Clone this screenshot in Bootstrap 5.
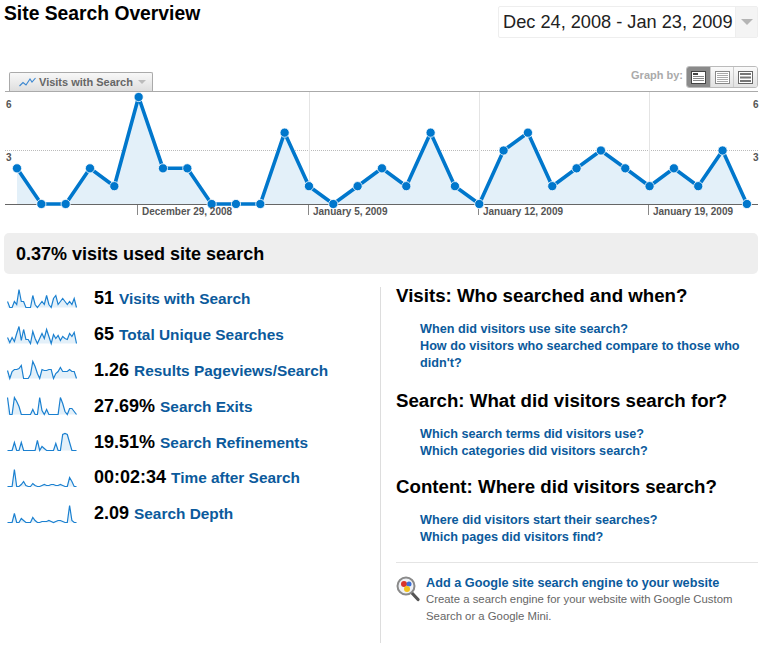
<!DOCTYPE html>
<html lang="en">
<head>
<meta charset="utf-8">
<title>Site Search Overview</title>
<link rel="stylesheet" href="https://cdn.jsdelivr.net/npm/bootstrap@5.3.0/dist/css/bootstrap.min.css">
<style>
html,body{background:#fff;font-family:"Liberation Sans",Arial,sans-serif;color:#000}
.page-wrap{width:763px;padding:0 5px 0 4px;overflow:hidden}
.head-row{height:72px}
.page-title{font-size:19.3px;font-weight:700;line-height:22px;margin:3px 0 0}
.date-box{margin-top:6px;height:32px;width:260px;border:1px solid #eee;border-radius:2px;font-size:18.2px;color:#222}
.date-text{flex:1;padding-left:4px;line-height:30px;white-space:nowrap}
.date-caret{width:22px;background:#f4f4f4;border-left:1px solid #eee}
.caret-down{width:0;height:0;border-left:6px solid transparent;border-right:6px solid transparent;border-top:6px solid #b5b5b5}
.tool-row{height:19px;margin-left:5px}
.metric-tab{height:19px;width:144px;border:1px solid #aaa;border-bottom:0;border-radius:2px 2px 0 0;background:linear-gradient(#f8f8f8,#dedede);font-size:11px;font-weight:700;color:#666;padding:0 5px 0 9px;gap:3px}
.small-caret{width:0;height:0;border-left:4px solid transparent;border-right:4px solid transparent;border-top:4px solid #bbb;margin-left:2px}
.graph-label{font-size:11px;font-weight:700;color:#aaa;margin-right:3px;position:relative;top:-5px}
.graph-btns{height:22px;width:72px;border:1px solid #bbb;border-radius:3px;overflow:hidden;margin-top:-5px;position:relative;top:-1px;flex:none}
.graph-btn{flex:1;background:linear-gradient(#fafafa,#e2e2e2);border-left:1px solid #ccc}
.graph-btn.is-on{background:#8a8a8a;border-left:0}
.chart-svg{display:block;width:763px;height:127px;margin-left:-4px}
.chart-svg text{font-family:"Liberation Sans",Arial,sans-serif;font-size:10px;font-weight:700;fill:#555}
.summary-bar{height:41px;margin-top:15px;background:#eee;border-radius:5px;font-size:18px;font-weight:700;padding-left:12px;line-height:42px}
.lower-row{margin-top:6px}
.metric-col{width:376px;padding-top:1px}
.metric-item{height:35.8px;padding-left:3px}
.spark{width:70px;height:24px;flex:none;margin:0 17px 2px 0}
.metric-val{font-size:18px;font-weight:700;margin-right:5px}
.metric-link{font-size:15.4px;font-weight:700;color:#0b5a9c;text-decoration:none}
.topic-col{width:378px;border-left:1px solid #ddd;padding-left:15px;height:356px;margin-top:7px}
.topic-title{font-size:18.7px;font-weight:700;line-height:22px;margin:0 0 14px}
.first-title{margin-top:-2px}
.topic-links{padding-left:24px;margin-bottom:16px;font-size:12.65px;font-weight:700;line-height:17px}
.first-links{margin-bottom:18px}
.topic-links a{display:block;color:#0b5a9c;text-decoration:none}
.promo{border-top:1px solid #e4e4e4;padding-top:11px;gap:6px;margin-top:1px}
.promo-icon{width:24px;height:26px;flex:none;margin-top:2px}
.promo-link{font-size:12.7px;font-weight:700;color:#0b5a9c;text-decoration:none;display:block;line-height:17px;margin-top:1px}
.promo-text{font-size:11.35px;color:#666;line-height:17px;margin:-1px 0 0;white-space:nowrap}
</style>
</head>
<body>
<div class="page-wrap">
  <div class="head-row d-flex justify-content-between align-items-start">
    <h1 class="page-title">Site Search Overview</h1>
    <div class="date-box d-flex">
      <div class="date-text">Dec 24, 2008 - Jan 23, 2009</div>
      <div class="date-caret d-flex align-items-center justify-content-center"><span class="caret-down"></span></div>
    </div>
  </div>
  <div class="tool-row d-flex justify-content-between align-items-start">
    <div class="metric-tab d-flex align-items-center">
      <svg width="17" height="10" viewBox="0 0 17 10"><polyline points="0.5,9 4,5.5 7,8 11,2 13,5 16.5,1" fill="none" stroke="#3b87d0" stroke-width="1.1"/></svg>
      <span>Visits with Search</span><span class="small-caret"></span>
    </div>
    <div class="d-flex align-items-center">
      <span class="graph-label">Graph by:</span>
      <div class="graph-btns d-flex">
        <div class="graph-btn is-on d-flex align-items-center justify-content-center"><svg width="15" height="13"><rect x=".5" y=".5" width="14" height="12" fill="#fff" stroke="#444"/><rect x="2" y="2" width="5" height="2" fill="#444"/><path d="M2 5.5h11M2 7.5h11M2 9.5h11" stroke="#888"/></svg></div>
        <div class="graph-btn d-flex align-items-center justify-content-center"><svg width="15" height="13"><rect x=".5" y=".5" width="14" height="12" fill="#fff" stroke="#888"/><path d="M2 2.5h11M2 4.5h11M2 6.5h11M2 8.5h11M2 10.5h11" stroke="#aaa"/></svg></div>
        <div class="graph-btn d-flex align-items-center justify-content-center"><svg width="15" height="13"><rect x=".5" y=".5" width="14" height="12" fill="#fff" stroke="#666"/><path d="M2 3h11M2 6.500h11M2 10h11" stroke="#777" stroke-width="2"/></svg></div>
      </div>
    </div>
  </div>
  <svg class="chart-svg" id="chart" viewBox="0 91 763 127"></svg>
  <div class="summary-bar">0.37% visits used site search</div>
  <div class="lower-row d-flex">
    <div class="metric-col" id="metrics"></div>
    <div class="topic-col">
      <h2 class="topic-title first-title">Visits: Who searched and when?</h2>
      <div class="topic-links first-links"><a href="#">When did visitors use site search?</a><a href="#">How do visitors who searched compare to those who didn't?</a></div>
      <h2 class="topic-title">Search: What did visitors search for?</h2>
      <div class="topic-links"><a href="#">Which search terms did visitors use?</a><a href="#">Which categories did visitors search?</a></div>
      <h2 class="topic-title">Content: Where did visitors search?</h2>
      <div class="topic-links"><a href="#">Where did visitors start their searches?</a><a href="#">Which pages did visitors find?</a></div>
      <div class="promo d-flex">
        <svg class="promo-icon" viewBox="0 0 24 26"><line x1="15" y1="16" x2="22" y2="23.500" stroke="#555" stroke-width="3.2" stroke-linecap="round"/><circle cx="10" cy="10" r="8.500" fill="#eef0f4" stroke="#8a8a8a" stroke-width="2"/><circle cx="8" cy="8" r="3" fill="#d9342b"/><circle cx="13" cy="8" r="2.500" fill="#3a6fd8"/><circle cx="11" cy="13" r="3" fill="#f2c21a"/></svg>
        <div><a class="promo-link" href="#">Add a Google site search engine to your website</a><p class="promo-text">Create a search engine for your website with Google Custom<br>Search or a Google Mini.</p></div>
      </div>
    </div>
  </div>
</div>
<script src="https://cdn.jsdelivr.net/npm/bootstrap@5.3.0/dist/js/bootstrap.bundle.min.js"></script>
<script>
var main=[2,0,0,2,1,6,2,2,0,0,0,4,1,0,1,2,1,4,1,0,3,4,1,2,3,2,1,2,1,3,0];
var X=function(i){return 17+i*24.33};
var Y=function(v){return 204-v*17.83};
var pts=main.map(function(v,i){return X(i).toFixed(1)+','+Y(v).toFixed(1)}).join(' ');
var s='';
s+='<line x1="5" x2="758" y1="91.5" y2="91.5" stroke="#aaa"/>';
s+='<line x1="5" x2="758" y1="150.5" y2="150.5" stroke="#bbb" stroke-dasharray="1 1"/>';
[139,309,479,649].forEach(function(x,i){s+='<line x1="'+(x+.5)+'" x2="'+(x+.5)+'" y1="92" y2="204" stroke="#e4e4e4"/>';s+='<line x1="'+(x-.5+(i==0?-1:0))+'" x2="'+(x-.5+(i==0?-1:0))+'" y1="204" y2="215" stroke="#888"/>'});
s+='<polygon points="17,204 '+pts+' 747,204" fill="#e3f0f9"/>';
s+='<line x1="5" x2="758" y1="204.5" y2="204.5" stroke="#666"/>';
s+='<polyline points="'+pts+'" fill="none" stroke="#0077cc" stroke-width="3.6" stroke-linejoin="round"/>';
main.forEach(function(v,i){s+='<circle cx="'+X(i)+'" cy="'+Y(v)+'" r="4.6" fill="#0077cc" stroke="#fff" stroke-width=".8"/>'});
[['6',6,108],['3',6,161],['6',753,108],['3',753,161]].forEach(function(t){s+='<text x="'+t[1]+'" y="'+t[2]+'">'+t[0]+'</text>'});
[['December 29, 2008',142],['January 5, 2009',313],['January 12, 2009',483],['January 19, 2009',653]].forEach(function(t){s+='<text x="'+t[1]+'" y="215">'+t[0]+'</text>'});
document.getElementById('chart').innerHTML=s;
var rows=[
['51','Visits with Search',main.map(function(v){return v*3})],
['65','Total Unique Searches',[6,1,6,2,10,17,3,14,4,4,0,12,5,0,5,10,5,14,7,0,9,5,8,3,7,5,4,10,7,11,0]],
['1.26','Results Pageviews/Search',[8,0,7,9,9,10,13,0,0,0,4,17,12,5,0,9,8,8,9,9,0,5,7,11,7,7,7,9,7,7,0]],
['27.69%','Search Exits',[17,0,0,17,13,8,0,0,0,0,0,5,0,0,17,4,0,5,0,0,0,0,0,17,11,3,0,6,6,3,0]],
['19.51%','Search Refinements',[0,0,0,8,0,0,8,0,0,0,0,0,0,10,0,4,2,0,0,0,0,7,0,0,16,17,16,8,0,0,0]],
['00:02:34','Time after Search',[0,0,0,17,0,0,2,5,1,0,0,3,1,0,0,1,2,1,1,2,2,1,1,2,1,0,0,9,5,0,0]],
['2.09','Search Depth',[0,0,0,9,0,0,4,2,0,0,0,5,2,0,0,1,1,1,2,1,0,1,2,2,1,0,0,17,2,0,0]]
];
document.getElementById('metrics').innerHTML=rows.map(function(r){
  var p=r[2].map(function(v,i){return (0.5+i*2.3).toFixed(1)+','+(21.5-v).toFixed(1)}).join(' ');
  return '<div class="metric-item d-flex align-items-center"><svg class="spark" viewBox="0 0 70 24"><polygon points="0.5,21.5 '+p+' 69.5,21.5" fill="#e3f0f9"/><polyline points="'+p+'" fill="none" stroke="#1b80d0" stroke-width="1.2"/></svg><span class="metric-val">'+r[0]+'</span><a class="metric-link" href="#">'+r[1]+'</a></div>';
}).join('');
</script>
</body>
</html>
